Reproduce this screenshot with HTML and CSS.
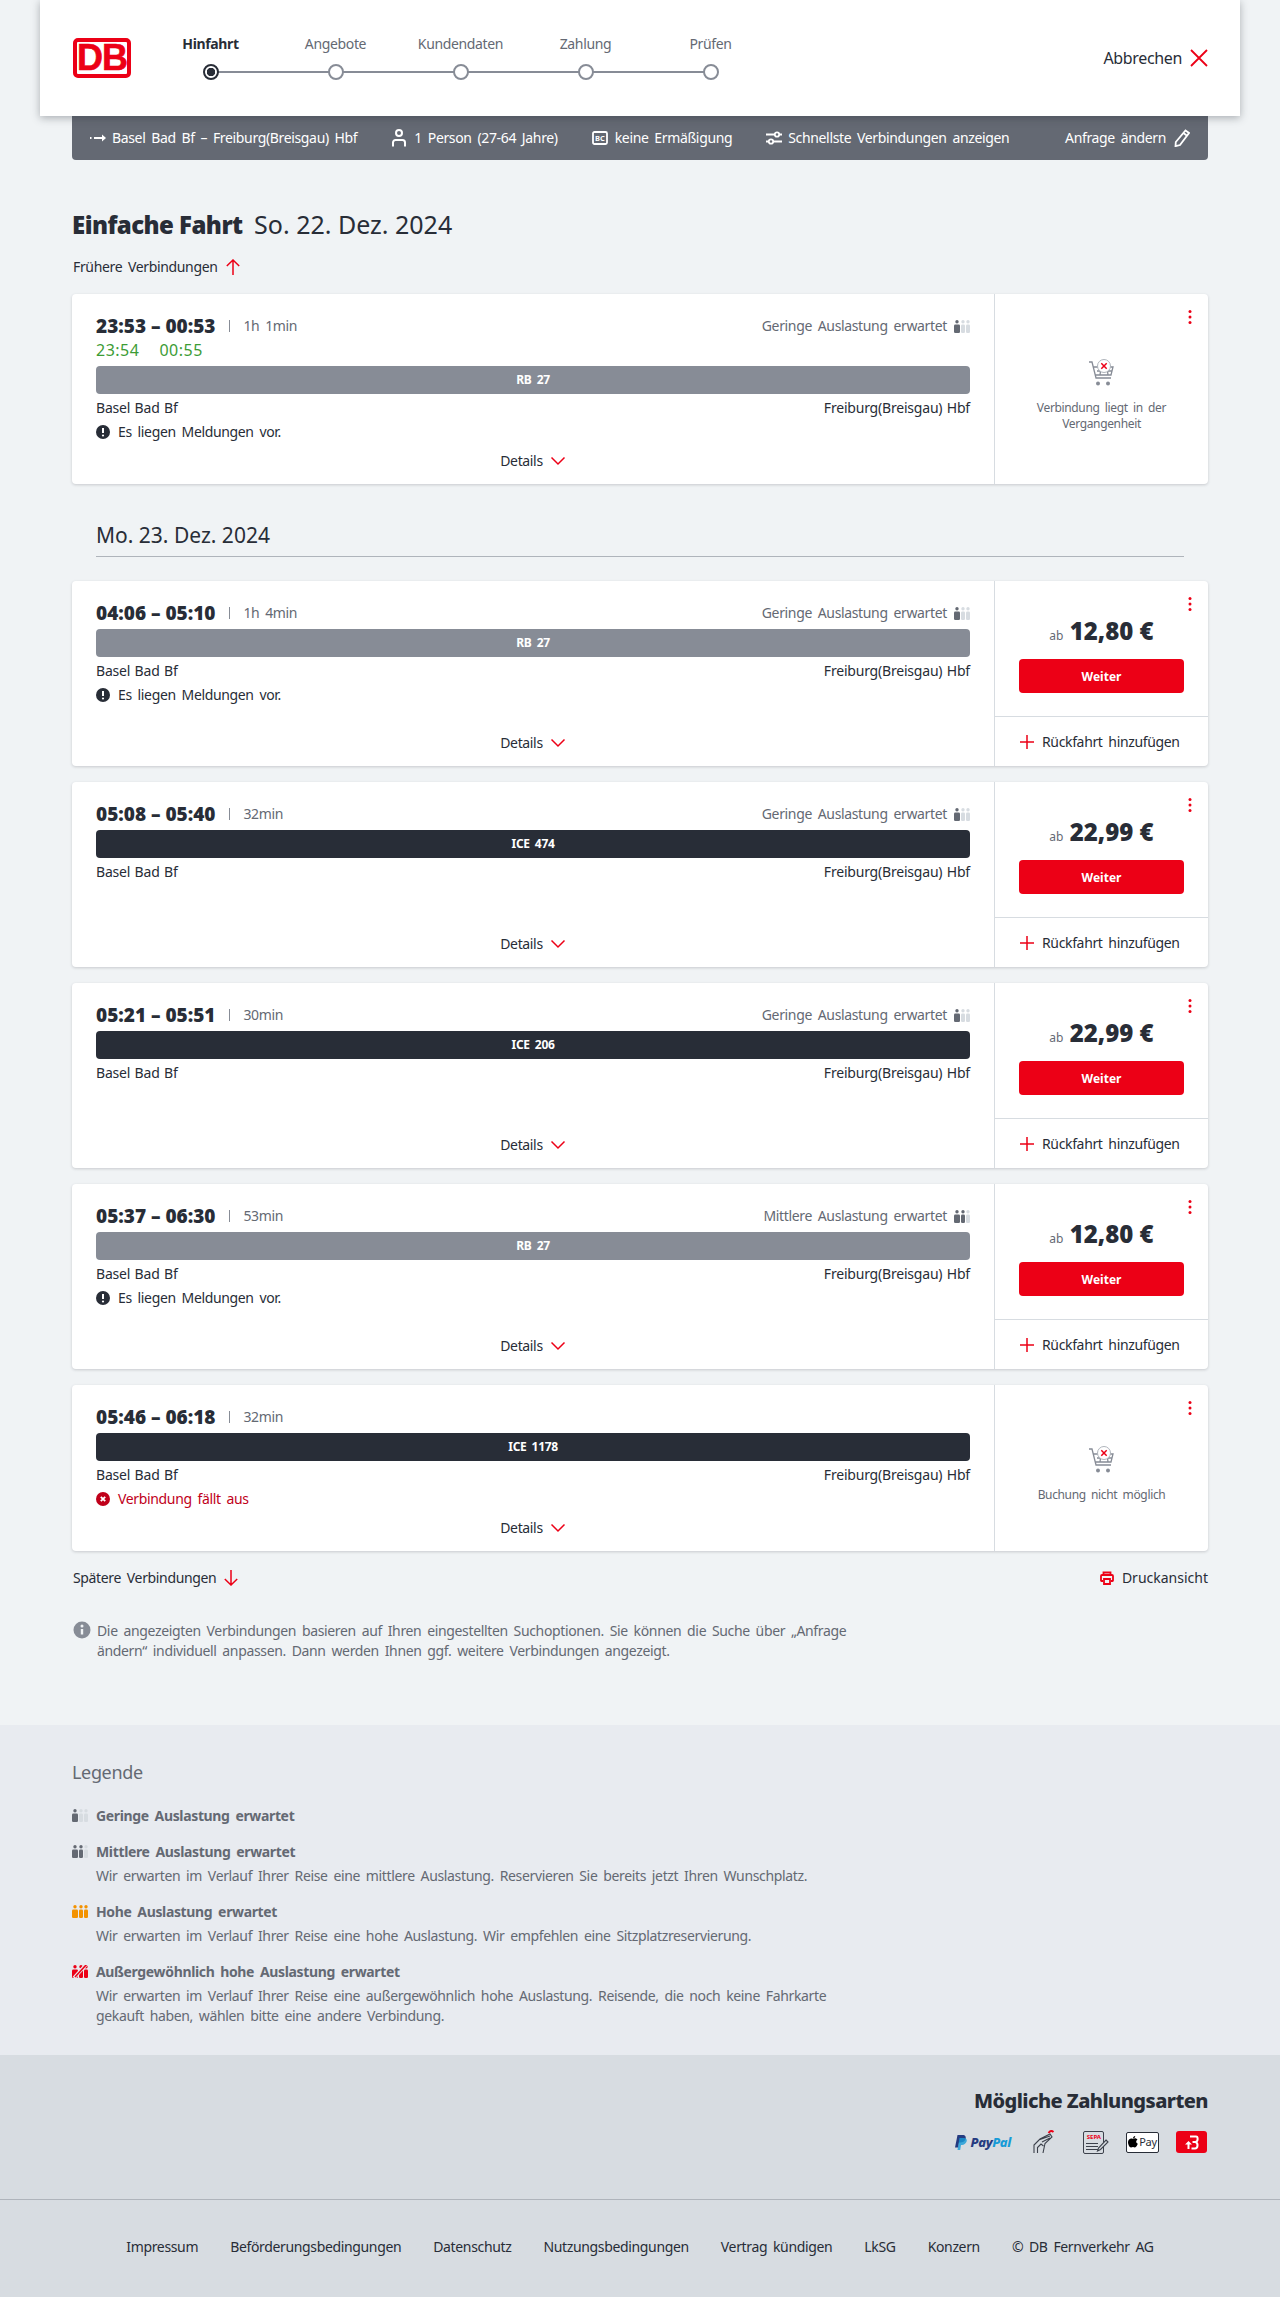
FILE: index.html
```html
<!DOCTYPE html>
<html lang="de">
<head>
    <meta charset="UTF-8">
    <meta name="viewport" content="width=device-width, initial-scale=1.0">
    <title>Einfache Fahrt</title>
    <link rel="stylesheet" href="styles.css">
</head>
<body>
    <svg class="defs" width="0" height="0">
        <symbol id="chevron" viewBox="0 0 16 10"><path d="M1.500 1.500 8 8l6.500-6.500" fill="none" stroke="currentColor" stroke-width="1.500"/></symbol>
        <symbol id="plus" viewBox="0 0 14 14"><path d="M7 0v14M0 7h14" stroke="currentColor" stroke-width="1.500"/></symbol>
        <symbol id="dots" viewBox="0 0 4 14"><circle cx="2" cy="1.500" r="1.500"/><circle cx="2" cy="7" r="1.500"/><circle cx="2" cy="12.500" r="1.500"/></symbol>
        <symbol id="alert" viewBox="0 0 14 14"><circle cx="7" cy="7" r="7" fill="#282d37"/><path d="M7 3v5" stroke="#fff" stroke-width="2"/><circle cx="7" cy="10.500" r="1.100" fill="#fff"/></symbol>
        <symbol id="person" viewBox="0 0 16 13"><rect x="0" y="4.500" width="6" height="8.500" rx="1.300" fill="var(--a)"/><circle cx="3" cy="1.700" r="1.700" fill="var(--a)"/><rect x="7" y="4.500" width="4" height="8.500" rx="1.200" fill="var(--b)"/><circle cx="9" cy="1.700" r="1.700" fill="var(--b)"/><rect x="12" y="4.500" width="4" height="8.500" rx="1.200" fill="var(--c)"/><circle cx="14" cy="1.700" r="1.700" fill="var(--c)"/></symbol>
        <symbol id="cart" viewBox="0 0 27 27">
            <path d="M1 3h3l4 16h15M5 8h20l-2 8H7M9 12h15M13 8l-1 8M19 8l1 8" fill="none" stroke="#878c96" stroke-width="1.300"/>
            <circle cx="10" cy="24.500" r="2" fill="#878c96"/><circle cx="20" cy="24.500" r="2" fill="#878c96"/>
            <circle cx="16" cy="7" r="6.500" fill="#fff" stroke="#afb4bb"/>
            <path d="m13.300 4.300 5.400 5.400m0-5.400-5.400 5.400" stroke="#ec0016" stroke-width="1.500"/>
        </symbol>
    </svg>

    <header class="topbar">
        <div class="db-logo">DB</div>
        <ol class="steps">
            <li class="step step-active"><span>Hinfahrt</span><i></i></li>
            <li class="step"><span>Angebote</span><i></i></li>
            <li class="step"><span>Kundendaten</span><i></i></li>
            <li class="step"><span>Zahlung</span><i></i></li>
            <li class="step"><span>Prüfen</span><i></i></li>
        </ol>
        <a class="cancel">Abbrechen
            <svg width="18" height="18" viewBox="0 0 18 18"><path d="m1 1 16 16M17 1 1 17" stroke="#ec0016" stroke-width="1.800"/></svg>
        </a>
    </header>

    <div class="summary">
        <span class="sum-item sum-route">
            <svg width="16" height="10" viewBox="0 0 16 10"><path d="M0 5h1.500M4 5h10" stroke="#fff" stroke-width="2"/><path d="M12 1.500 16 5l-4 3.500z" fill="#fff"/></svg>
            Basel Bad Bf – Freiburg(Breisgau) Hbf</span>
        <span class="sum-item sum-wide">
            <svg width="16" height="18" viewBox="0 0 16 18"><circle cx="8" cy="4" r="3" fill="none" stroke="#fff" stroke-width="2"/><path d="M2 17.500V13.500A2.500 2.500 0 0 1 4.500 11h7a2.500 2.500 0 0 1 2.500 2.500v4" fill="none" stroke="#fff" stroke-width="2"/></svg>
            1 Person (27-64 Jahre)</span>
        <span class="sum-item sum-wide">
            <svg width="16" height="14" viewBox="0 0 16 14"><rect x="1" y="1" width="14" height="12" rx="1.500" fill="none" stroke="#fff" stroke-width="1.800"/><text x="8" y="10" text-anchor="middle" class="bc-text">BC</text></svg>
            keine Ermäßigung</span>
        <span class="sum-item">
            <svg width="16" height="14" viewBox="0 0 16 14"><path d="M0 3.500h9M13 3.500h3M0 10.500h3M7 10.500h9" stroke="#fff" stroke-width="2"/><circle cx="11" cy="3.500" r="2.200" fill="none" stroke="#fff" stroke-width="1.800"/><circle cx="5" cy="10.500" r="2.200" fill="none" stroke="#fff" stroke-width="1.800"/></svg>
            Schnellste Verbindungen anzeigen</span>
        <span class="sum-item sum-edit">Anfrage ändern
            <svg width="16" height="18" viewBox="0 0 16 18"><path d="M11.500 1.500 15 4 6 16l-4.500 1.200L1.800 13zM9.500 4l3.500 2.700" fill="none" stroke="#fff" stroke-width="1.800"/></svg>
        </span>
    </div>

    <main class="content">
        <h1 class="page-title"><b>Einfache Fahrt</b> So. 22. Dez. 2024</h1>
        <a class="more-link more-earlier">Frühere Verbindungen
            <svg width="14" height="16" viewBox="0 0 14 16"><path d="M7 16V1M.800 7 7 1l6.200 6" fill="none" stroke="#ec0016" stroke-width="1.500"/></svg>
        </a>

        <article class="card">
            <div class="trip">
                <div class="trip-head">
                    <span class="times">23:53 – 00:53</span><span class="duration">1h 1min</span>
                    <span class="load">Geringe Auslastung erwartet <svg class="occ occ-low"><use href="#person"/></svg></span>
                </div>
                <div class="delay"><span>23:54</span><span>00:55</span></div>
                <div class="train train-regio">RB 27</div>
                <div class="stations"><span>Basel Bad Bf</span><span>Freiburg(Breisgau) Hbf</span></div>
                <div class="note"><svg><use href="#alert"/></svg>Es liegen Meldungen vor.</div>
                <a class="details">Details <svg class="chev"><use href="#chevron"/></svg></a>
            </div>
            <aside class="side side-off">
                <svg class="menu"><use href="#dots"/></svg>
                <svg class="cart"><use href="#cart"/></svg>
                <p>Verbindung liegt in der Vergangenheit</p>
            </aside>
        </article>

        <h2 class="date-head">Mo. 23. Dez. 2024</h2>

        <article class="card card-offer">
            <div class="trip">
                <div class="trip-head">
                    <span class="times">04:06 – 05:10</span><span class="duration">1h 4min</span>
                    <span class="load">Geringe Auslastung erwartet <svg class="occ occ-low"><use href="#person"/></svg></span>
                </div>
                <div class="train train-regio">RB 27</div>
                <div class="stations"><span>Basel Bad Bf</span><span>Freiburg(Breisgau) Hbf</span></div>
                <div class="note"><svg><use href="#alert"/></svg>Es liegen Meldungen vor.</div>
                <a class="details">Details <svg class="chev"><use href="#chevron"/></svg></a>
            </div>
            <aside class="side">
                <svg class="menu"><use href="#dots"/></svg>
                <div class="offer">
                    <div class="price"><small>ab</small> 12,80 €</div>
                    <button class="btn-next">Weiter</button>
                </div>
                <a class="return"><svg><use href="#plus"/></svg>Rückfahrt hinzufügen</a>
            </aside>
        </article>

        <article class="card card-offer">
            <div class="trip">
                <div class="trip-head">
                    <span class="times">05:08 – 05:40</span><span class="duration">32min</span>
                    <span class="load">Geringe Auslastung erwartet <svg class="occ occ-low"><use href="#person"/></svg></span>
                </div>
                <div class="train train-ice">ICE 474</div>
                <div class="stations"><span>Basel Bad Bf</span><span>Freiburg(Breisgau) Hbf</span></div>
                <a class="details">Details <svg class="chev"><use href="#chevron"/></svg></a>
            </div>
            <aside class="side">
                <svg class="menu"><use href="#dots"/></svg>
                <div class="offer">
                    <div class="price"><small>ab</small> 22,99 €</div>
                    <button class="btn-next">Weiter</button>
                </div>
                <a class="return"><svg><use href="#plus"/></svg>Rückfahrt hinzufügen</a>
            </aside>
        </article>

        <article class="card card-offer">
            <div class="trip">
                <div class="trip-head">
                    <span class="times">05:21 – 05:51</span><span class="duration">30min</span>
                    <span class="load">Geringe Auslastung erwartet <svg class="occ occ-low"><use href="#person"/></svg></span>
                </div>
                <div class="train train-ice">ICE 206</div>
                <div class="stations"><span>Basel Bad Bf</span><span>Freiburg(Breisgau) Hbf</span></div>
                <a class="details">Details <svg class="chev"><use href="#chevron"/></svg></a>
            </div>
            <aside class="side">
                <svg class="menu"><use href="#dots"/></svg>
                <div class="offer">
                    <div class="price"><small>ab</small> 22,99 €</div>
                    <button class="btn-next">Weiter</button>
                </div>
                <a class="return"><svg><use href="#plus"/></svg>Rückfahrt hinzufügen</a>
            </aside>
        </article>

        <article class="card card-offer">
            <div class="trip">
                <div class="trip-head">
                    <span class="times">05:37 – 06:30</span><span class="duration">53min</span>
                    <span class="load">Mittlere Auslastung erwartet <svg class="occ occ-mid"><use href="#person"/></svg></span>
                </div>
                <div class="train train-regio">RB 27</div>
                <div class="stations"><span>Basel Bad Bf</span><span>Freiburg(Breisgau) Hbf</span></div>
                <div class="note"><svg><use href="#alert"/></svg>Es liegen Meldungen vor.</div>
                <a class="details">Details <svg class="chev"><use href="#chevron"/></svg></a>
            </div>
            <aside class="side">
                <svg class="menu"><use href="#dots"/></svg>
                <div class="offer">
                    <div class="price"><small>ab</small> 12,80 €</div>
                    <button class="btn-next">Weiter</button>
                </div>
                <a class="return"><svg><use href="#plus"/></svg>Rückfahrt hinzufügen</a>
            </aside>
        </article>

        <article class="card">
            <div class="trip">
                <div class="trip-head">
                    <span class="times">05:46 – 06:18</span><span class="duration">32min</span>
                </div>
                <div class="train train-ice">ICE 1178</div>
                <div class="stations"><span>Basel Bad Bf</span><span>Freiburg(Breisgau) Hbf</span></div>
                <div class="note note-cancel">
                    <svg viewBox="0 0 14 14"><circle cx="7" cy="7" r="7" fill="#c0001a"/><path d="m4.800 4.800 4.400 4.400m0-4.400-4.400 4.400" stroke="#fff" stroke-width="1.800"/></svg>
                    Verbindung fällt aus</div>
                <a class="details">Details <svg class="chev"><use href="#chevron"/></svg></a>
            </div>
            <aside class="side side-off">
                <svg class="menu"><use href="#dots"/></svg>
                <svg class="cart"><use href="#cart"/></svg>
                <p>Buchung nicht möglich</p>
            </aside>
        </article>

        <div class="after-list">
            <a class="more-link">Spätere Verbindungen
                <svg width="14" height="16" viewBox="0 0 14 16"><path d="M7 0v15M.800 9 7 15l6.200-6" fill="none" stroke="#ec0016" stroke-width="1.500"/></svg>
            </a>
            <a class="print">
                <svg width="14" height="14" viewBox="0 0 14 14"><path d="M3.500 4V1.500h7V4M3 10H1.500a.5.5 0 0 1-.5-.5V5q0-1 1-1h10q1 0 1 1v4.500a.5.5 0 0 1-.5.5H11M4 8h6v5H4z" fill="none" stroke="#ec0016" stroke-width="1.800"/></svg>
                Druckansicht</a>
        </div>

        <div class="info">
            <svg width="18" height="18" viewBox="0 0 18 18"><circle cx="9" cy="9" r="8.500" fill="#878c96"/><path d="M9 8v5.500" stroke="#f0f3f5" stroke-width="2.400"/><circle cx="9" cy="5" r="1.500" fill="#f0f3f5"/></svg>
            <p>Die angezeigten Verbindungen basieren auf Ihren eingestellten Suchoptionen. Sie können die Suche über „Anfrage ändern“ individuell anpassen. Dann werden Ihnen ggf. weitere Verbindungen angezeigt.</p>
        </div>
    </main>

    <section class="legend">
        <h3>Legende</h3>
        <div class="legend-item">
            <svg class="occ occ-low"><use href="#person"/></svg>
            <div><b>Geringe Auslastung erwartet</b></div>
        </div>
        <div class="legend-item">
            <svg class="occ occ-mid"><use href="#person"/></svg>
            <div><b>Mittlere Auslastung erwartet</b><p>Wir erwarten im Verlauf Ihrer Reise eine mittlere Auslastung. Reservieren Sie bereits jetzt Ihren Wunschplatz.</p></div>
        </div>
        <div class="legend-item">
            <svg class="occ occ-high"><use href="#person"/></svg>
            <div><b>Hohe Auslastung erwartet</b><p>Wir erwarten im Verlauf Ihrer Reise eine hohe Auslastung. Wir empfehlen eine Sitzplatzreservierung.</p></div>
        </div>
        <div class="legend-item">
            <svg class="occ occ-full" viewBox="0 0 16 13"><use href="#person" width="16" height="13"/><path d="M15.500-2 2 13" stroke="#e8ebf0" stroke-width="3.500"/><path d="M15-1 3 12" stroke="#ec0016" stroke-width="1.600"/></svg>
            <div><b>Außergewöhnlich hohe Auslastung erwartet</b><p>Wir erwarten im Verlauf Ihrer Reise eine außergewöhnlich hohe Auslastung. Reisende, die noch keine Fahrkarte gekauft haben, wählen bitte eine andere Verbindung.</p></div>
        </div>
    </section>

    <section class="payment">
        <h3>Mögliche Zahlungsarten</h3>
        <div class="pay-icons">
            <span class="pay-paypal">
                <svg width="12" height="15" viewBox="0 0 12 15"><path d="M2.500 0h5c3 0 3.800 2 3 4.300S7.500 7.500 5.500 7.500H4l-.8 5H0z" fill="#253b80"/><path d="M4.500 3h4.500c2.500 0 3.300 1.800 2.500 3.800S9 10 7 10H6l-.8 5H2.500z" fill="#179bd7" opacity=".8"/></svg>
                <em>Pay<i>Pal</i></em>
            </span>
            <svg class="pay-card" width="22" height="24" viewBox="0 0 22 24"><path d="M1 23v-8l6-6 10-5 2 3-7 6.500L10 23M4.500 23v-5.500L8 14l2.500 2M7 9.500 17 6M9 12l8-4" fill="none" stroke="#3c414b" stroke-width="1.100"/><path d="M15.500 3c1.500-2.500 3.500-2.500 5-1" fill="none" stroke="#ec0016" stroke-width="1.800"/></svg>
            <span class="pay-sepa"><b>SEPA</b><i></i><i></i><i></i>
                <svg width="13" height="13" viewBox="0 0 13 13"><path d="M10 1l2 2-7.500 7.500L1.500 12l1-3z" fill="#d7dce1" stroke="#3c414b" stroke-width="1.100"/></svg>
            </span>
            <span class="pay-apple">
                <svg width="10" height="12" viewBox="0 0 10 12"><path d="M5 3c1-.6 2-.8 3-.5.700.2 1.200.6 1.500 1.200C8 4.500 7.500 6.500 9.800 7.800 9.200 9.500 8 11.500 7 11.500c-.8 0-1.200-.5-2-.5s-1.200.5-2 .5C1.500 11.500 0 8.500 0 6.300 0 3.500 2.800 1.800 5 3zM5 2.500C5 1.200 6 .2 7.200 0c.1 1.300-1 2.500-2.200 2.500z"/></svg>
                Pay</span>
            <span class="pay-bonus">
                <svg width="16" height="15" viewBox="0 0 16 15"><path d="M6 1.500h6c2 0 2.500 4.500-.5 5.500 3 1 2.500 6.500-.5 6.500H7.500M8.500 7H11" fill="none" stroke="#fff" stroke-width="2"/><path d="M1 9.500 4.500 6 8 9.500H5.500V14h-2V9.500z" fill="#fff"/></svg>
            </span>
        </div>
    </section>

    <footer class="footer">
        <a>Impressum</a>
        <a>Beförderungsbedingungen</a>
        <a>Datenschutz</a>
        <a>Nutzungsbedingungen</a>
        <a>Vertrag kündigen</a>
        <a>LkSG</a>
        <a>Konzern</a>
        <a>© DB Fernverkehr AG</a>
    </footer>
</body>
</html>
```

FILE: styles.css
```css
* {
    box-sizing: border-box;
}

body {
    margin: 0;
    background-color: #f0f3f5;
    color: #282d37;
    font-family: "Noto Sans", sans-serif;
    font-size: 14px;
    line-height: 20px;
    letter-spacing: -0.35px;
    word-spacing: 2.5px;
}

.defs {
    position: absolute;
}

svg {
    flex: none;
}

/* Kopf */
.topbar {
    position: relative;
    z-index: 2;
    display: flex;
    align-items: center;
    height: 116px;
    margin: 0 40px;
    padding: 0 32px 0 33px;
    background: #fff;
    box-shadow: 0 2px 8px rgba(40, 45, 55, 0.35);
}

.db-logo {
    width: 58px;
    height: 40px;
    border: 4px solid #ec0016;
    border-radius: 5px;
    color: #ec0016;
    font-family: "Liberation Sans", sans-serif;
    font-size: 36px;
    font-weight: bold;
    line-height: 32px;
    letter-spacing: -1px;
    text-align: center;
    -webkit-text-stroke: 0.6px #ec0016;
}

.steps {
    display: flex;
    margin: 0 0 0 17px;
    padding: 0;
    list-style: none;
}

.step {
    position: relative;
    display: flex;
    flex-direction: column;
    align-items: center;
    width: 125px;
    color: #646973;
}

.step span {
    height: 20px;
    margin: -2px 0 10px;
}

.step i {
    width: 16px;
    height: 16px;
    border: 2px solid #878c96;
    border-radius: 50%;
    background: #fff;
    z-index: 1;
}

.step::after {
    content: "";
    position: absolute;
    left: 50%;
    top: 35px;
    width: 125px;
    height: 2px;
    background: #878c96;
}

.step:last-child::after {
    display: none;
}

.step-active {
    color: #282d37;
    font-weight: bold;
}

.step-active i {
    border-color: #282d37;
    background: radial-gradient(circle, #282d37 0 4px, #fff 4.500px);
}

.cancel {
    display: flex;
    align-items: center;
    gap: 8px;
    margin-left: auto;
    font-size: 16px;
}

.summary {
    display: flex;
    align-items: center;
    height: 44px;
    margin: 0 72px;
    padding: 0 18px;
    border-radius: 0 0 4px 4px;
    background: #646973;
    color: #fff;
}

.sum-item {
    display: flex;
    align-items: center;
    gap: 6px;
    margin-right: 34px;
}

.sum-wide {
    gap: 7px;
}

.bc-text {
    fill: #fff;
    font-size: 7.500px;
    font-weight: bold;
    letter-spacing: 0;
}

.sum-edit {
    gap: 8px;
    margin: 0 0 0 auto;
}

/* Inhalt */
.content {
    padding: 0 72px;
}

.page-title {
    margin: 48px 0 0;
    font-size: 25px;
    font-weight: normal;
    line-height: 32px;
    letter-spacing: 0;
    word-spacing: 0;
}

.page-title b {
    margin-right: 5px;
    font-size: 24px;
    font-weight: 900;
    letter-spacing: -0.55px;
}

.more-link {
    display: inline-flex;
    align-items: center;
    gap: 8px;
    margin-left: 1px;
}

.more-earlier {
    display: flex;
    margin-top: 16px;
    margin-bottom: 17px;
}

.card {
    position: relative;
    display: grid;
    grid-template-columns: 1fr 214px;
    margin-bottom: 16px;
    border-radius: 4px;
    background: #fff;
    box-shadow: 0 1px 3px rgba(40, 45, 55, 0.2);
}

.card-offer {
    min-height: 185px;
}

.trip {
    display: flex;
    flex-direction: column;
    padding: 20px 24px 13px;
}

.trip-head {
    display: flex;
    align-items: center;
    height: 24px;
}

.times {
    font-size: 19px;
    font-weight: 900;
    letter-spacing: 0;
    word-spacing: 0;
}

.duration {
    margin-left: 14px;
    padding-left: 14px;
    background: linear-gradient(#878c96, #878c96) 0 center / 1px 12px no-repeat;
    color: #646973;
}

.load {
    display: flex;
    align-items: center;
    gap: 7px;
    margin-left: auto;
    color: #646973;
}

.occ {
    width: 16px;
    height: 13px;
    --a: #646973;
    --b: #d7dce1;
    --c: #d7dce1;
}

.occ-mid {
    --b: #646973;
}

.occ-high {
    --a: #f39200;
    --b: #f39200;
    --c: #f39200;
}

.occ-full {
    --a: #ec0016;
    --b: #ec0016;
    --c: #ec0016;
}

.delay {
    display: flex;
    gap: 20px;
    height: 24px;
    color: #3c9c35;
    font-size: 16px;
    line-height: 24px;
    letter-spacing: 0.5px;
}

.train {
    height: 28px;
    margin-top: 4px;
    border-radius: 4px;
    color: #fff;
    font-size: 12px;
    font-weight: bold;
    line-height: 28px;
    text-align: center;
}

.train-regio {
    background: #878c96;
}

.train-ice {
    background: #282d37;
}

.stations {
    display: flex;
    justify-content: space-between;
    margin-top: 4px;
    letter-spacing: -0.2px;
    word-spacing: 1px;
}

.note {
    display: flex;
    align-items: center;
    gap: 8px;
    margin-top: 4px;
}

.note svg {
    width: 14px;
    height: 14px;
}

.note-cancel {
    color: #c0001a;
}

.details {
    display: flex;
    align-items: center;
    justify-content: center;
    gap: 7px;
    margin-top: auto;
    padding-top: 9px;
}

.chev {
    width: 16px;
    height: 10px;
    color: #ec0016;
}

.side {
    display: flex;
    flex-direction: column;
    border-left: 1px solid #d7dce1;
}

.menu {
    position: absolute;
    top: 16px;
    right: 16px;
    width: 4px;
    height: 14px;
    fill: #ec0016;
}

.side-off {
    align-items: center;
    justify-content: center;
    padding: 12px 24px 0;
    text-align: center;
}

.side-off p {
    margin: 0;
    color: #646973;
    font-size: 12px;
    line-height: 16px;
}

.cart {
    width: 27px;
    height: 27px;
    margin-bottom: 14px;
}

.offer {
    height: 136px;
    padding: 34px 24px 0;
    border-bottom: 1px solid #d7dce1;
}

.price {
    height: 32px;
    margin-bottom: 12px;
    font-size: 24px;
    font-weight: 900;
    line-height: 32px;
    letter-spacing: 0;
    word-spacing: 0;
    text-align: center;
}

.price small {
    color: #646973;
    font-size: 12px;
    font-weight: normal;
}

.btn-next {
    width: 100%;
    height: 34px;
    border: none;
    border-radius: 4px;
    background: #ec0016;
    color: #fff;
    font-family: inherit;
    font-size: 12px;
    font-weight: bold;
}

.return {
    display: flex;
    flex: 1;
    align-items: center;
    gap: 8px;
    padding: 1px 0 0 25px;
}

.return svg {
    width: 14px;
    height: 14px;
    color: #ec0016;
}

.date-head {
    margin: 36px 24px 24px;
    padding-bottom: 5px;
    border-bottom: 1px solid #afb4bb;
    font-size: 21px;
    font-weight: normal;
    line-height: 31px;
    letter-spacing: 0;
    word-spacing: 0;
}

.after-list {
    display: flex;
    justify-content: space-between;
    margin-top: 17px;
}

.print {
    display: flex;
    align-items: center;
    gap: 8px;
    letter-spacing: 0;
}

.info {
    display: flex;
    gap: 6px;
    width: 800px;
    margin-top: 33px;
    padding-left: 1px;
    color: #646973;
}

.info p {
    margin: 0;
}

/* Legende */
.legend {
    height: 330px;
    margin-top: 64px;
    padding: 34px 72px 0;
    background: #e8ebf0;
    color: #646973;
}

.legend h3 {
    margin: 0 0 21px;
    font-size: 18px;
    font-weight: normal;
    line-height: 26px;
}

.legend-item {
    display: flex;
    gap: 8px;
    margin-bottom: 16px;
}

.legend-item .occ {
    margin-top: 3px;
}

.legend-item > div {
    width: 760px;
}

.legend-item p {
    margin: 4px 0 0;
}

.payment {
    height: 145px;
    padding: 32px 72px 0;
    border-bottom: 1px solid #afb4bb;
    background: #d7dce1;
    text-align: right;
}

.payment h3 {
    margin: 0 0 15px;
    font-size: 20px;
    font-weight: 800;
    line-height: 28px;
    letter-spacing: -0.55px;
    word-spacing: 0;
}

.pay-icons {
    display: flex;
    justify-content: flex-end;
    align-items: center;
    height: 24px;
    padding-right: 1px;
}

.pay-paypal {
    display: flex;
    align-items: center;
    gap: 4px;
    margin-right: 22px;
}

.pay-paypal em {
    color: #253b80;
    font-size: 13px;
    font-weight: 800;
}

.pay-paypal i {
    color: #179bd7;
}

.pay-card {
    margin-right: 28px;
}

.pay-sepa {
    position: relative;
    display: block;
    width: 21px;
    height: 23px;
    margin-right: 22px;
    padding: 2px 2px 0;
    border: 1px solid #3c414b;
    border-radius: 2px;
    font-size: 6px;
    line-height: 7px;
    letter-spacing: 0;
    color: #ec0016;
}

.pay-sepa b,
.pay-sepa i {
    display: block;
}

.pay-sepa i {
    width: 12px;
    height: 1px;
    margin-top: 2px;
    background: #3c414b;
}

.pay-sepa svg {
    position: absolute;
    right: -6px;
    bottom: 1px;
}

.pay-apple {
    display: flex;
    align-items: center;
    justify-content: center;
    gap: 1px;
    width: 33px;
    height: 21px;
    margin-right: 17px;
    border: 1px solid #282d37;
    border-radius: 2px;
    background: #fff;
    font-size: 11px;
}

.pay-bonus {
    display: flex;
    align-items: center;
    justify-content: center;
    width: 31px;
    height: 22px;
    border-radius: 3px;
    background: #ec0016;
}

.footer {
    display: flex;
    justify-content: center;
    gap: 32px;
    height: 99px;
    padding-top: 37px;
    background: #d7dce1;
}
```
